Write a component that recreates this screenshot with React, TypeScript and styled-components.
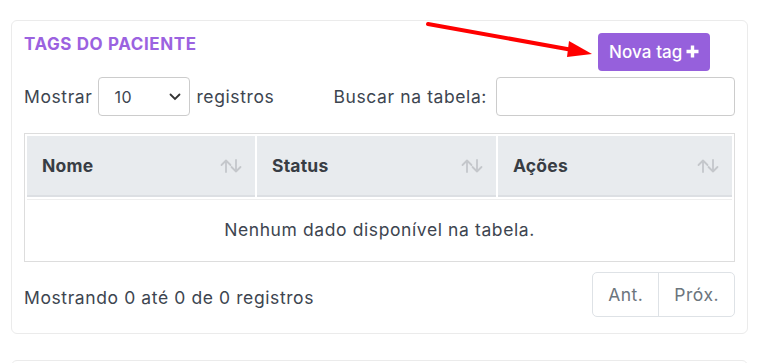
import styled, { createGlobalStyle } from "styled-components";

const GlobalStyle = createGlobalStyle`
  html, body {
    margin: 0;
    padding: 0;
    background: #ffffff;
  }
  body {
    font-family: Inter, "Noto Sans", "Liberation Sans", sans-serif;
    color: #3d4550;
  }
  * {
    box-sizing: border-box;
  }
`;

const SortIcon = () => (
  <svg width="22" height="14" viewBox="0 0 22 14" fill="none">
    <g stroke="#c4c7cb" strokeWidth="1.8" strokeLinecap="round" strokeLinejoin="round">
      <path d="M6 13V1.5M1.5 6L6 1.5L10.5 6" />
      <path d="M16 1V12.5M11.5 8L16 12.5L20.5 8" />
    </g>
  </svg>
);

const App = () => {
  return (
    <>
      <GlobalStyle />
      <Page>
        <Card>
          <Header>
            <Title>TAGS DO PACIENTE</Title>
            <NewButton>
              Nova tag
              <PlusIcon width="13" height="13" viewBox="0 0 13 13">
                <path d="M6.5 0.5v12M0.5 6.5h12" stroke="#fff" strokeWidth="3.4" />
              </PlusIcon>
            </NewButton>
          </Header>

          <Controls>
            <ControlGroup>
              <Label>Mostrar</Label>
              <Select>
                <span>10</span>
                <svg width="12" height="8" viewBox="0 0 12 8" fill="none">
                  <path d="M1.5 1.5L6 6L10.5 1.5" stroke="#333" strokeWidth="1.8" strokeLinecap="round" />
                </svg>
              </Select>
              <Label>registros</Label>
            </ControlGroup>
            <ControlGroup>
              <Label>Buscar na tabela:</Label>
              <SearchInput />
            </ControlGroup>
          </Controls>

          <Table>
            <colgroup>
              <col style={{ width: 228 }} />
              <col style={{ width: 239 }} />
              <col style={{ width: 234 }} />
            </colgroup>
            <thead>
              <tr>
                {["Nome", "Status", "Ações"].map((h) => (
                  <Th key={h}>
                    <ThInner>
                      {h}
                      <SortIcon />
                    </ThInner>
                  </Th>
                ))}
              </tr>
            </thead>
            <tbody>
              <tr>
                <EmptyCell colSpan={3}>Nenhum dado disponível na tabela.</EmptyCell>
              </tr>
            </tbody>
          </Table>

          <Footer>
            <Info>Mostrando 0 até 0 de 0 registros</Info>
            <Pagination>
              <PageButton>Ant.</PageButton>
              <PageButton>Próx.</PageButton>
            </Pagination>
          </Footer>

          <Arrow width="180" height="40" viewBox="0 0 180 40">
            <path d="M2 3L152 30" stroke="#ff0000" strokeWidth="4" strokeLinecap="round" />
            <path d="M143 20L166 33L141 36Z" fill="#ff0000" />
          </Arrow>
        </Card>
        <NextCard />
      </Page>
    </>
  );
};

export default App;

const Page = styled.div`
  padding: 20px 18px 0 11px;
  height: 363px;
  overflow: hidden;
`;

const Card = styled.div`
  position: relative;
  width: 737px;
  height: 314px;
  border: 1px solid #ebebeb;
  border-radius: 6px;
  padding: 12px 12px 0 12px;
`;

const NextCard = styled.div`
  width: 737px;
  height: 40px;
  margin-top: 26px;
  border: 1px solid #ebebeb;
  border-radius: 6px;
`;

const Header = styled.div`
  display: flex;
  align-items: flex-start;
  justify-content: space-between;
  padding-right: 25px;
`;

const Title = styled.div`
  margin-top: 1px;
  font-size: 17px;
  font-weight: 700;
  color: #9b62e0;
  letter-spacing: 0.6px;
`;

const NewButton = styled.div`
  display: flex;
  align-items: center;
  gap: 3px;
  height: 38px;
  width: 112px;
  padding: 0 0 0 11px;
  background: #9660dc;
  border-radius: 4px;
  color: #fff;
  font-size: 17px;
  font-weight: 500;
  letter-spacing: 0.1px;
  white-space: nowrap;
`;

const PlusIcon = styled.svg`
  flex-shrink: 0;
  margin-top: -1px;
`;

const Controls = styled.div`
  display: flex;
  justify-content: space-between;
  align-items: center;
  margin-top: 6px;
`;

const ControlGroup = styled.div`
  display: flex;
  align-items: center;
  gap: 6px;
`;

const Label = styled.span`
  font-size: 17.5px;
  color: #3d4550;
  letter-spacing: 0.6px;
`;

const Select = styled.div`
  display: flex;
  align-items: center;
  justify-content: space-between;
  width: 92px;
  height: 39px;
  padding: 0 8px 0 15px;
  border: 1px solid #cccccc;
  border-radius: 4px;
  font-size: 16px;
  letter-spacing: 0.5px;
  color: #3d4550;
`;

const SearchInput = styled.div`
  width: 239px;
  height: 39px;
  margin-left: 3px;
  border: 1px solid #cccccc;
  border-radius: 4px;
`;

const Table = styled.table`
  width: 711px;
  margin-top: 17px;
  table-layout: fixed;
  border-collapse: separate;
  border-spacing: 2px;
  border: 1px solid #dddddd;
`;

const Th = styled.th`
  height: 61px;
  padding: 0 13px 0 15px;
  background: #e8ebee;
  border-bottom: 2px solid #dcdfe3;
  text-align: left;
  font-size: 17.5px;
  font-weight: 700;
  letter-spacing: 0.2px;
  color: #383d44;
`;

const ThInner = styled.div`
  display: flex;
  align-items: center;
  justify-content: space-between;
`;

const EmptyCell = styled.td`
  height: 60px;
  border-top: 1px solid #eeeeee;
  text-align: center;
  font-size: 17.5px;
  color: #3d4550;
  letter-spacing: 0.6px;
`;

const Footer = styled.div`
  display: flex;
  align-items: center;
  justify-content: space-between;
  margin-top: 10px;
  width: 711px;
`;

const Info = styled.span`
  margin-top: 5px;
  font-size: 17.5px;
  color: #3d4550;
  letter-spacing: 0.6px;
`;

const Pagination = styled.div`
  display: flex;
  height: 45px;
  border: 1px solid #dee2e6;
  border-radius: 5px;
  overflow: hidden;
`;

const PageButton = styled.div`
  display: flex;
  align-items: center;
  padding: 0 15px;
  font-size: 17.5px;
  letter-spacing: 0.5px;
  color: #6c757d;
  & + & {
    border-left: 1px solid #dee2e6;
  }
`;

const Arrow = styled.svg`
  position: absolute;
  left: 414px;
  top: 0px;
`;
